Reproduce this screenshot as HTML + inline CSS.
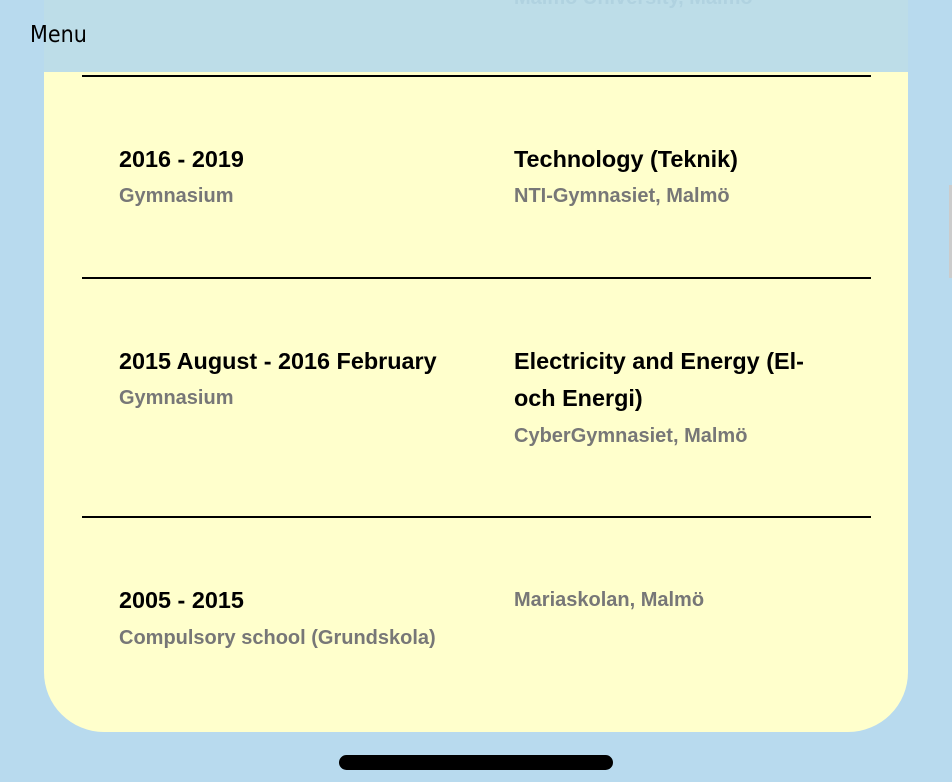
<!DOCTYPE html>
<html><head><meta charset="utf-8"><style>
body{margin:0;width:952px;height:782px;background:#b8daee;position:relative;overflow:hidden;font-family:"Liberation Sans",Arial,sans-serif}
.card{position:absolute;left:44px;top:0;width:864px;height:732px;background:#ffffcc;border-radius:0 0 60px 60px}
.hdr{position:absolute;left:44px;top:0;width:864px;height:72px;background:#bddde8}
.ghost{position:absolute;left:514px;top:-13px;color:#b0d2e0;font-weight:bold;font-size:20px}
.menu{position:absolute;left:30px;top:22px;font-size:23px;color:#000;font-family:"DejaVu Sans Condensed","DejaVu Sans",sans-serif}
.line{position:absolute;left:82px;width:789px;height:2px;background:#000}
.t{position:absolute;font-weight:bold;font-size:23.4px;color:#000;line-height:37px}
.s{position:absolute;font-weight:bold;font-size:20px;color:#777}
.bar{position:absolute;left:339px;top:755px;width:274px;height:15px;background:#000;border-radius:8px}
.sb{position:absolute;left:949px;top:185px;width:3px;height:93px;background:#ccc}
</style></head><body>
<div class="card"></div>
<div class="hdr"></div>
<div class="ghost">Malmö University, Malmö</div>
<div class="menu">Menu</div>
<div class="line" style="top:75px"></div>
<div class="t" style="left:119px;top:141px">2016 - 2019</div>
<div class="s" style="left:119px;top:185px">Gymnasium</div>
<div class="t" style="left:514px;top:141px">Technology (Teknik)</div>
<div class="s" style="left:514px;top:185px">NTI-Gymnasiet, Malmö</div>
<div class="line" style="top:277px"></div>
<div class="t" style="left:119px;top:343px">2015 August - 2016 February</div>
<div class="s" style="left:119px;top:387px">Gymnasium</div>
<div class="t" style="left:514px;top:343px;width:320px">Electricity and Energy (El-<br>och Energi)</div>
<div class="s" style="left:514px;top:425px">CyberGymnasiet, Malmö</div>
<div class="line" style="top:516px"></div>
<div class="t" style="left:119px;top:582px">2005 - 2015</div>
<div class="s" style="left:119px;top:627px">Compulsory school (Grundskola)</div>
<div class="s" style="left:514px;top:589px">Mariaskolan, Malmö</div>
<div class="bar"></div>
<div class="sb"></div>
</body></html>
